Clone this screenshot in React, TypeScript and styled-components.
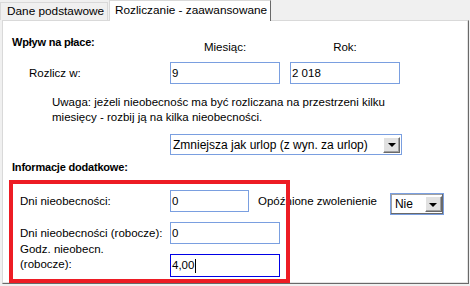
import React from 'react';
import styled, {createGlobalStyle} from 'styled-components';

const GlobalStyle = createGlobalStyle`
  html, body {
    margin: 0;
    padding: 0;
    background: #f0f0f0;
  }
  body {
    width: 470px;
    height: 286px;
    overflow: hidden;
    font-family: "Liberation Sans", Arial, sans-serif;
    font-size: 11.5px;
    color: #000;
  }
`;

const Window = styled.div`
  width: 470px;
  height: 286px;
  display: flex;
  flex-direction: column;
`;

const TabBar = styled.div`
  display: flex;
  align-items: flex-end;
  height: 20px;
`;

const Tab = styled.div<{active?: boolean; w: number}>`
  box-sizing: border-box;
  width: ${p => p.w}px;
  height: ${p => (p.active ? 21 : 18)}px;
  margin-left: ${p => (p.active ? 1 : 0)}px;
  margin-bottom: ${p => (p.active ? -1 : 0)}px;
  padding-left: ${p => (p.active ? 5 : 6)}px;
  line-height: ${p => (p.active ? 19 : 16)}px;
  font-size: 11.8px;
  background: ${p => (p.active ? '#fff' : '#f0f0f0')};
  border: 1px solid #d9d9d9;
  border-bottom: none;
  border-right-color: ${p => (p.active ? '#696969' : '#d9d9d9')};
  position: relative;
  z-index: ${p => (p.active ? 2 : 1)};
  white-space: nowrap;
`;

const Panel = styled.div`
  box-sizing: border-box;
  margin-left: 2px;
  width: 467px;
  height: 264px;
  background: #fff;
  border-top: 1px solid #d9d9d9;
  border-left: 1px solid #d9d9d9;
  border-right: 1px solid #696969;
  border-bottom: 1px solid #696969;
  box-shadow: inset -1px -1px 0 #e3e3e3;
  display: flex;
  flex-direction: column;
`;

const Grid = styled.div<{h: number}>`
  display: grid;
  grid-template-columns: 157px 110px 110px;
  column-gap: 10px;
  height: ${p => p.h}px;
`;

const Title = styled.div<{top: number; left: number}>`
  margin-top: ${p => p.top}px;
  padding-left: ${p => p.left}px;
  font-weight: bold;
  font-size: 11px;
  letter-spacing: -0.2px;
  line-height: 15px;
`;

const ColLabel = styled.div`
  margin-top: 19px;
  text-align: center;
  line-height: 15px;
`;

const RowLabel = styled.div<{left: number}>`
  align-self: center;
  padding-left: ${p => p.left}px;
  line-height: 15px;
  white-space: nowrap;
`;

const Field = styled.div<{w?: number; h?: number; focused?: boolean}>`
  box-sizing: border-box;
  width: ${p => (p.w ? `${p.w}px` : 'auto')};
  height: ${p => p.h ?? 22}px;
  border: 1px solid ${p => (p.focused ? '#0000e6' : '#7a9fe0')};
  padding-left: 1px;
  line-height: ${p => (p.h ?? 22) - 2}px;
  font-size: 11.5px;
  display: flex;
  align-items: center;
`;

const Caret = styled.span`
  display: inline-block;
  width: 1px;
  height: 14px;
  margin-left: 1px;
  background: #000;
`;

const Note = styled.div`
  margin-top: 11px;
  padding-left: 49px;
  line-height: 15px;
`;

const Select = styled.div<{w: number; h: number; dark?: boolean}>`
  box-sizing: border-box;
  width: ${p => p.w}px;
  height: ${p => p.h}px;
  border: 1px solid #7a9fe0;
  box-shadow: ${p => (p.dark ? 'inset -1px -1px 0 #696969, inset 1px 1px 0 #a0a0a0' : 'none')};
  display: flex;
  align-items: center;
  justify-content: space-between;
  padding: 0 1px 0 ${p => (p.dark ? 4 : 2)}px;
  font-size: 12px;
  background: #fff;
`;

const ArrowButton = styled.div`
  box-sizing: border-box;
  width: 17px;
  height: 16px;
  background: #e1e1e1;
  border-top: 1px solid #fff;
  border-left: 1px solid #fff;
  border-right: 1px solid #696969;
  border-bottom: 1px solid #696969;
  box-shadow: inset -1px -1px 0 #a0a0a0;
  display: flex;
  align-items: center;
  justify-content: center;
  &::after {
    content: '';
    border-left: 4px solid transparent;
    border-right: 4px solid transparent;
    border-top: 4px solid #000;
    margin-top: 1px;
  }
`;

const SelectRow = styled.div`
  margin-top: 9px;
  padding-left: 167px;
`;

const Section = styled.div`
  position: relative;
  display: flex;
  flex-direction: column;
`;

const Row = styled.div<{top: number}>`
  display: flex;
  margin-top: ${p => p.top}px;
  height: 22px;
`;

const LabelCell = styled.div<{lift?: number}>`
  box-sizing: border-box;
  width: 167px;
  padding-left: 17px;
  line-height: ${p => (p.lift ? 15 : 15)}px;
  align-self: ${p => (p.lift ? 'flex-start' : 'center')};
  margin-top: ${p => -(p.lift ?? 0)}px;
  white-space: nowrap;
`;

const SideText = styled.div`
  margin-left: 9px;
  padding-top: 4px;
  line-height: 15px;
  white-space: nowrap;
`;

const SideSelect = styled.div`
  margin-left: 13px;
  margin-top: 3px;
`;

const Highlight = styled.div`
  position: absolute;
  top: 5px;
  left: 6px;
  width: 281px;
  height: 103px;
  box-sizing: border-box;
  border: 4px solid #ed1c24;
  pointer-events: none;
`;

export default function App() {
    return (
        <>
            <GlobalStyle/>
            <Window>
                <TabBar>
                    <Tab w={108}>Dane podstawowe</Tab>
                    <Tab w={162} active>Rozliczanie - zaawansowane</Tab>
                </TabBar>
                <Panel>
                    <Grid h={41}>
                        <Title top={14} left={9}>Wpływ na płace:</Title>
                        <ColLabel>Miesiąc:</ColLabel>
                        <ColLabel>Rok:</ColLabel>
                    </Grid>
                    <Grid h={22}>
                        <RowLabel left={26}>Rozlicz w:</RowLabel>
                        <Field>9</Field>
                        <Field>2 018</Field>
                    </Grid>
                    <Note>
                        Uwaga: jeżeli nieobecnośc ma być rozliczana na przestrzeni kilku<br/>
                        miesięcy - rozbij ją na kilka nieobecności.
                    </Note>
                    <SelectRow>
                        <Select w={232} h={21}>
                            <span>Zmniejsza jak urlop (z wyn. za urlop)</span>
                            <ArrowButton/>
                        </Select>
                    </SelectRow>
                    <Title top={5} left={9}>Informacje dodatkowe:</Title>
                    <Section>
                        <Row top={15}>
                            <LabelCell>Dni nieobecności:</LabelCell>
                            <Field w={79}>0</Field>
                            <SideText>Opóźnione zwolenienie</SideText>
                            <SideSelect>
                                <Select w={54} h={22} dark>
                                    <span>Nie</span>
                                    <ArrowButton/>
                                </Select>
                            </SideSelect>
                        </Row>
                        <Row top={10}>
                            <LabelCell>Dni nieobecności (robocze):</LabelCell>
                            <Field w={110}>0</Field>
                        </Row>
                        <Row top={10}>
                            <LabelCell lift={12}>Godz. nieobecn.<br/>(robocze):</LabelCell>
                            <Field w={110} h={23} focused>4,00<Caret/></Field>
                        </Row>
                        <Highlight/>
                    </Section>
                </Panel>
            </Window>
        </>
    );
}
